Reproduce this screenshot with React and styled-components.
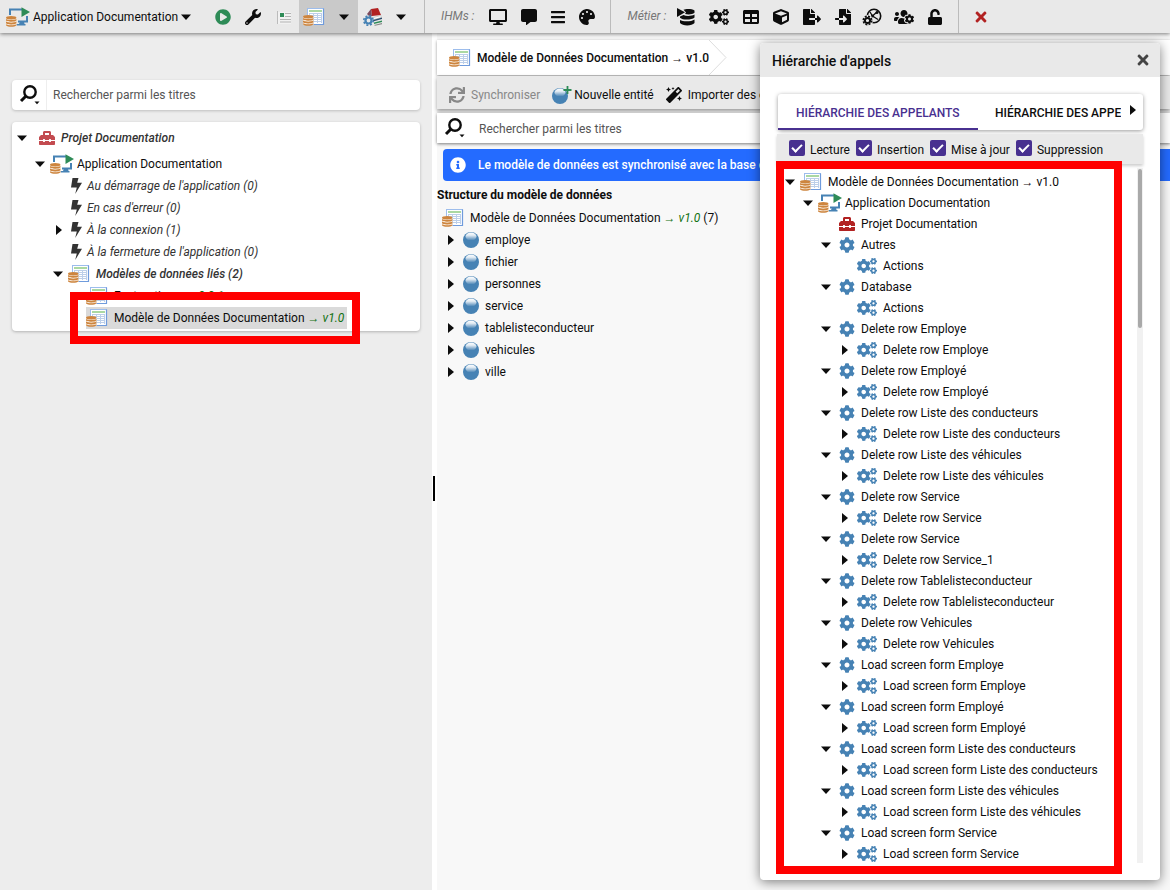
import React from 'react';
import styled, { createGlobalStyle, css } from 'styled-components';
import {
  FaBars,
  FaCog,
  FaCogs,
  FaCommentAlt,
  FaCube,
  FaDesktop,
  FaFileExport,
  FaFileImport,
  FaInfoCircle,
  FaMagic,
  FaPalette,
  FaPlayCircle,
  FaSync,
  FaTable,
  FaTimes,
  FaToolbox,
  FaUnlock,
  FaUsersCog,
  FaWrench,
} from 'react-icons/fa';

const COLOR = {
  ink: '#0d0d0d',
  grey: '#e9e9e9',
  blue: '#4682b4',
  orange: '#cd853f',
  green: '#2e8b57',
  red: '#b22222',
  violet: '#483090',
  version: '#107010',
  marker: '#ff0000',
};

const GlobalStyle = createGlobalStyle`
  *, *::before, *::after {
    box-sizing: border-box;
  }

  html, body, #root {
    height: 100%;
    margin: 0;
  }

  body, button, input {
    font-family: Roboto, 'Liberation Sans', sans-serif;
    font-size: 12px;
    color: ${COLOR.ink};
  }

  button {
    padding: 0;
    border: 0;
    background: none;
    cursor: pointer;
  }
`;

/* ---------- drawings ---------- */

const Coins = ({ y = 9 }) => (
  <g transform={`translate(0 ${y})`} fill={COLOR.orange}>
    <path d="M0 1.500h10.500v8.500h-10.500z" fill="#f6e6d4" />
    <ellipse cx="5.200" cy="1.700" rx="5.200" ry="1.700" />
    <path d="M0 2.900c1.700 1.500 8.700 1.500 10.400 0v1.600c-1.700 1.600-8.700 1.600-10.400 0z" />
    <path d="M0 5.600c1.700 1.500 8.700 1.500 10.400 0v1.600c-1.700 1.600-8.700 1.600-10.400 0z" />
    <path d="M0 8.200c1.700 1.500 8.700 1.500 10.400 0v1c-1.700 2-8.700 2-10.400 0z" />
  </g>
);

const ModelIcon = () => (
  <svg width="22" height="20" viewBox="0 0 22 20" aria-hidden="true">
    <rect x="4.500" y="1.500" width="16" height="16" fill="#fff" stroke="#9dbdec" />
    <path d="M4.500 17.500h16v-16" fill="none" stroke="#6f9bdc" strokeWidth="1.200" />
    <path d="M6 4h13" stroke="#86c77a" strokeWidth="1.400" />
    <rect x="6" y="6" width="13" height="10" fill="#bccfe9" />
    <path
      d="M7 7.500h3M11 7.500h3M15 7.500h3M7 9.500h3M11 9.500h3M15 9.500h3M7 11.500h3M11 11.500h3M15 11.500h3M11 13.500h3M15 13.500h3M11 15.500h3M15 15.500h3"
      stroke="#fff"
    />
    <Coins y={8} />
  </svg>
);

const AppIcon = () => (
  <svg width="24" height="20" viewBox="0 0 24 20" aria-hidden="true">
    <path d="M4 8V2.500h12M21 9v5.500h-9" fill="none" stroke={COLOR.blue} strokeWidth="2" />
    <path d="M14 14.500h4l.5 2.500h1v1.500h-9V17h2.500z" fill={COLOR.blue} />
    <path d="M15.500.300 24 5l-8.500 5z" fill={COLOR.green} />
    <Coins y={9} />
  </svg>
);

const DocIcon = () => (
  <svg width="16" height="16" viewBox="0 0 16 16" aria-hidden="true">
    <path d="M1 3h14v12H1z" fill="#f1f1f1" />
    <path d="M1.500 2v13" stroke="#bbb" />
    <path d="M4 4h4v4H4z" fill={COLOR.green} />
    <path d="M9 4.500h6M9 7.500h6M4 10.500h11M4 13h11" stroke="#b3b3b3" />
  </svg>
);

const BooksIcon = () => (
  <svg width="20" height="20" viewBox="0 0 20 20" aria-hidden="true">
    <path d="m8 2 7-1 3 7-9 1z" fill={COLOR.red} />
    <path d="M8 2 4 7l3 3 2-1z" fill="#7d4a5c" />
    <path d="m6 9 3 2 9-2.500v2L9 13z" fill="#fff" stroke="#aaa" strokeWidth=".5" />
    <path d="m10 13 9-2.500v1.500L10 14.500z" fill="#30506e" />
    <path d="m11 15.500 8-2v1.500l-8 2z" fill={COLOR.green} />
    <path d="m11 18 8-2v1.200l-7 1.500z" fill="#888" />
    <g transform="translate(0 8)">
      <circle cx="5.500" cy="5.500" r="3" fill={COLOR.grey} stroke={COLOR.blue} strokeWidth="2.200" />
      <circle
        cx="5.500"
        cy="5.500"
        r="4.700"
        fill="none"
        stroke={COLOR.blue}
        strokeWidth="1.600"
        strokeDasharray="2 1.690"
      />
    </g>
  </svg>
);

const DataActionIcon = () => (
  <svg width="18" height="18" viewBox="0 0 18 18" fill="currentColor" aria-hidden="true">
    <path d="M0 0 8 4.300 0 9z" />
    <path d="M9 4.600 6.500 1.800C9 .8 15 .8 17.500 2.500v2.200C15.500 6.500 11.500 6.800 8 6z" />
    <path d="M3 8.500 6.500 7c3 1.500 8 1.200 11-.5v3C15 12 6 12.500 3 9.800z" />
    <path d="M3 12c3 2 11.500 1.800 14.500-.5v3.600c-2.500 3.200-12 3.200-14.500 0z" />
  </svg>
);

const WebServiceIcon = () => (
  <svg width="20" height="18" viewBox="0 0 20 18" fill="none" stroke="currentColor" aria-hidden="true">
    <circle cx="12" cy="8" r="6.700" strokeWidth="1.600" />
    <path d="m8 4 2.500 4 5-4.500M10.500 8l5.500 3.500" strokeWidth="1.300" />
    <circle cx="10.500" cy="8" r="1.500" fill="currentColor" stroke="none" />
    <circle cx="15" cy="4.500" r="1.500" fill="currentColor" stroke="none" />
    <circle cx="5.500" cy="12.500" r="5.500" fill={COLOR.grey} stroke="none" />
    <circle cx="5.500" cy="12.500" r="2.600" strokeWidth="2" />
    <circle cx="5.500" cy="12.500" r="4.200" strokeWidth="1.600" strokeDasharray="2 1.300" />
  </svg>
);

const SphereIcon = ({ plus }) => (
  <svg width={plus ? 20 : 16} height={plus ? 18 : 16} viewBox={plus ? '0 -2 20 18' : '0 0 16 16'} aria-hidden="true">
    <defs>
      <linearGradient id="shine" x1="0" y1="0" x2="0" y2="1">
        <stop offset="0" stopColor="#fff" />
        <stop offset=".35" stopColor="#fff" stopOpacity=".85" />
        <stop offset="1" stopColor="#fff" stopOpacity="0" />
      </linearGradient>
    </defs>
    <circle cx="8" cy="8" r="8" fill={COLOR.blue} />
    <ellipse cx="8" cy="4.500" rx="5.500" ry="4" fill="url(#shine)" />
    {plus && <path d="M15.500-2V6M11.500 2H19.500" stroke={COLOR.green} strokeWidth="1.800" />}
  </svg>
);

const SearchIcon = () => (
  <svg width="22" height="22" viewBox="0 0 22 22" aria-hidden="true">
    <circle cx="12" cy="8" r="5.700" fill="none" stroke={COLOR.ink} strokeWidth="2.400" />
    <path d="m8 12-5 5" stroke={COLOR.ink} strokeWidth="3" />
    <path d="M16.500 17.500h5L19 20.200z" fill={COLOR.ink} />
  </svg>
);

const BoltIcon = () => (
  <svg width="12" height="16" viewBox="0 0 12 16" fill="#333" aria-hidden="true">
    <path d="M1.500 0h6L6.200 4.800H11L4.200 16l1.600-6.600H0z" />
  </svg>
);

const Caret = ({ open }) => (
  <svg width="10" height="10" viewBox="0 0 10 10" fill={COLOR.ink} aria-hidden="true">
    {open ? <path d="M0 2.500h10L5 8z" /> : <path d="M3 0v10L9 5z" />}
  </svg>
);

/* ---------- top bar ---------- */

const Page = styled.div`
  height: 100%;
  min-width: 1000px;
  display: flex;
  flex-direction: column;
  overflow: hidden;
  background: #ededed;
`;

const TopBar = styled.header`
  position: relative;
  z-index: 1;
  height: 33px;
  flex: none;
  display: flex;
  background: ${COLOR.grey};
  box-shadow: 0 1px 4px rgba(0, 0, 0, 0.5);
`;

const AppButton = styled.button`
  width: 208px;
  padding-left: 6px;
  display: flex;
  align-items: center;
  gap: 3px;
`;

const ToolGroup = styled.div`
  display: flex;
  border-right: 1px solid #bbb;
  padding-right: ${({ $end }) => $end || 0}px;
`;

const ToolButton = styled.button`
  width: ${({ $w }) => $w || 30}px;
  display: flex;
  align-items: center;
  justify-content: center;
  color: ${({ $color }) => $color || COLOR.ink};
  background: ${({ $active }) => ($active ? '#c9c9c9' : 'none')};
`;

const GroupLabel = styled.span`
  padding: 0 ${({ $gap }) => $gap}px 0 16px;
  line-height: 33px;
  font-style: italic;
  color: #777;
`;

/* ---------- layout ---------- */

const Body = styled.div`
  flex: 1;
  min-height: 0;
  display: flex;
`;

const SidePanel = styled.aside`
  width: 432px;
  flex: none;
  padding: 47px 12px 0;
  display: flex;
  flex-direction: column;
  gap: 12px;
`;

const Splitter = styled.div`
  width: 5px;
  display: flex;
  align-items: center;
  padding: 54px 1px 0;
  background: #fff;

  &::before {
    content: '';
    width: 2px;
    height: 25px;
    background: #000;
  }
`;

const Main = styled.main`
  flex: 1;
  min-width: 0;
  padding-top: 7px;
  display: flex;
  flex-direction: column;
  background: #f8f8f8;
`;

const Card = styled.section`
  padding: 2px 1px;
  border-radius: 4px;
  background: #fff;
  box-shadow: 0 1px 3px rgba(0, 0, 0, 0.25);
`;

const SearchBox = styled.div`
  height: 30px;
  flex: none;
  display: flex;
  border-radius: ${({ $flat }) => ($flat ? 0 : 4)}px;
  background: #fff;
  box-shadow: 0 1px 3px rgba(0, 0, 0, ${({ $flat }) => ($flat ? 0.5 : 0.2)});
  margin-top: ${({ $flat }) => ($flat ? 4 : 0)}px;
`;

const SearchButton = styled.button`
  width: 35px;
  display: grid;
  place-items: center;
  border-right: 1px solid ${({ $flat }) => ($flat ? '#fff' : '#eee')};
`;

const SearchInput = styled.input`
  flex: 1;
  min-width: 0;
  border: 0;
  padding: ${({ $flat }) => ($flat ? '2px 7px 0' : '0 6px')};
  background: none;
  outline: 0;

  &::placeholder {
    color: #555;
    opacity: 1;
  }
`;

const Search = ({ flat, id }) => (
  <SearchBox $flat={flat}>
    <SearchButton type="button" $flat={flat} aria-label="Options de recherche">
      <SearchIcon />
    </SearchButton>
    <SearchInput
      id={id}
      type="search"
      placeholder="Rechercher parmi les titres"
      aria-label="Rechercher parmi les titres"
      $flat={flat}
    />
  </SearchBox>
);

/* ---------- tree ---------- */

const Tree = styled.ul`
  margin: 0;
  padding: 0;
  list-style: none;
`;

const TreeRow = styled.li`
  height: ${({ $h }) => $h}px;
  padding-left: ${({ $level }) => $level * 18}px;
  display: flex;
  align-items: center;
`;

const Toggle = styled.button`
  width: 18px;
  height: 100%;
  display: grid;
  place-items: center;
`;

const Blank = styled.span`
  width: 18px;
`;

const ICONS = {
  model: { el: <ModelIcon />, before: 1, after: 6 },
  app: { el: <AppIcon />, before: 1, after: 3 },
  root: { el: <FaToolbox size={16} color="#c34b50" />, before: 8, after: 6 },
  project: { el: <FaToolbox size={16} color={COLOR.red} />, before: 4, after: 6 },
  event: { el: <BoltIcon />, before: 4, after: 4 },
  cog: { el: <FaCog size={16} color={COLOR.blue} />, before: 4, after: 6 },
  cogs: { el: <FaCogs size={20} color={COLOR.blue} />, before: 4, after: 6 },
  entity: { el: <SphereIcon />, before: 4, after: 6 },
};

const NodeIcon = styled.span`
  display: flex;
  padding-right: ${({ $after }) => $after}px;
`;

const NodeLabel = styled.span`
  position: relative;
  height: 22px;
  margin-left: ${({ $before }) => $before}px;
  padding-right: 3px;
  display: flex;
  align-items: center;
  white-space: pre;
  ${({ $soft }) =>
    $soft &&
    css`
      font-style: italic;
      color: #333;
    `}
  font-weight: ${({ $strong }) => ($strong ? 500 : 400)};
  background: ${({ $selected }) => ($selected ? '#dadada' : 'none')};
`;

const Version = styled.em`
  color: ${COLOR.version};
`;

const SelectedMarker = styled.span`
  position: absolute;
  inset: -15px -13px -15px -16px;
  border: 8px solid ${COLOR.marker};
  pointer-events: none;
`;

const TreeNode = ({ node, h = 22 }) => {
  const icon = ICONS[node.icon];
  return (
    <TreeRow $h={node.h || h} $level={node.level}>
      {node.open === undefined ? (
        !node.flush && <Blank />
      ) : (
        <Toggle type="button" aria-label={node.open ? 'Replier' : 'Déplier'} aria-expanded={node.open}>
          <Caret open={node.open} />
        </Toggle>
      )}
      <NodeLabel $before={icon.before} $soft={node.soft} $strong={node.strong} $selected={node.selected}>
        <NodeIcon $after={icon.after}>{icon.el}</NodeIcon>
        {node.text}
        {node.version && <Version> → {node.version}</Version>}
        {node.count && ` (${node.count})`}
        {node.selected && <SelectedMarker />}
      </NodeLabel>
    </TreeRow>
  );
};

const projectNodes = [
  { level: 0, icon: 'root', open: true, text: 'Projet Documentation', soft: true, strong: true, h: 28 },
  { level: 1, icon: 'app', open: true, text: 'Application Documentation', h: 23 },
  { level: 2, icon: 'event', text: "Au démarrage de l'application (0)", soft: true },
  { level: 2, icon: 'event', text: "En cas d'erreur (0)", soft: true },
  { level: 2, icon: 'event', open: false, text: 'À la connexion (1)', soft: true },
  { level: 2, icon: 'event', text: "À la fermeture de l'application (0)", soft: true },
  { level: 2, icon: 'model', open: true, text: 'Modèles de données liés (2)', soft: true, strong: true },
  { level: 3, icon: 'model', text: 'Facturation', version: 'v0.0.1' },
  { level: 3, icon: 'model', text: 'Modèle de Données Documentation', version: 'v1.0', selected: true },
];

const entities = ['employe', 'fichier', 'personnes', 'service', 'tablelisteconducteur', 'vehicules', 'ville'];

const callers = [
  ['Autres', 'Actions', true],
  ['Database', 'Actions', true],
  ['Delete row Employe'],
  ['Delete row Employé'],
  ['Delete row Liste des conducteurs'],
  ['Delete row Liste des véhicules'],
  ['Delete row Service'],
  ['Delete row Service', 'Delete row Service_1'],
  ['Delete row Tablelisteconducteur'],
  ['Delete row Vehicules'],
  ['Load screen form Employe'],
  ['Load screen form Employé'],
  ['Load screen form Liste des conducteurs'],
  ['Load screen form Liste des véhicules'],
  ['Load screen form Service'],
];

const callNodes = [
  { level: 0, icon: 'model', open: true, text: 'Modèle de Données Documentation → v1.0' },
  { level: 1, icon: 'app', open: true, text: 'Application Documentation' },
  { level: 2, icon: 'project', text: 'Projet Documentation' },
  ...callers.flatMap(([name, action = name, leaf]) => [
    { level: 2, icon: 'cog', open: true, text: name },
    { level: 3, icon: 'cogs', open: leaf ? undefined : false, text: action },
  ]),
];

/* ---------- main panel ---------- */

const Breadcrumb = styled.nav`
  height: 35px;
  flex: none;
  padding-left: 12px;
  display: flex;
  background: #fff;
  box-shadow: 0 1px 3px rgba(0, 0, 0, 0.4);
`;

const Crumb = styled.a`
  display: flex;
  align-items: center;
  gap: 6px;
  font-weight: 500;
  color: ${COLOR.ink};
  text-decoration: none;
`;

const Chevron = () => (
  <svg width="18" height="35" viewBox="0 0 18 35" fill="none" aria-hidden="true">
    <path d="M0 0 17 17.500 0 35" stroke="#ddd" />
  </svg>
);

const ActionBar = styled.div`
  height: 33px;
  flex: none;
  margin-top: 1px;
  padding-left: 12px;
  display: flex;
  gap: 12px;
  background: ${COLOR.grey};
  box-shadow: 0 2px 4px rgba(0, 0, 0, 0.4);
`;

const Action = styled.button`
  display: flex;
  align-items: center;
  gap: ${({ $gap }) => $gap}px;
  white-space: nowrap;
  padding-top: 4px;
  color: ${COLOR.ink};

  &:disabled {
    color: #888;
  }
`;

const Banner = styled.p`
  height: 32px;
  flex: none;
  margin: 6px 0 0 6px;
  padding-left: 7px;
  display: flex;
  align-items: center;
  gap: 12px;
  border-radius: 4px 0 0 4px;
  font-weight: 500;
  white-space: nowrap;
  color: #fff;
  background: #246bff;
`;

const Structure = styled.section`
  padding-left: 4px;
`;

const StructureTitle = styled.h2`
  margin: 0 0 0 -4px;
  padding-top: 2px;
  font-size: 12px;
  font-weight: 700;
  line-height: 24px;
`;

/* ---------- call hierarchy window ---------- */

const Dialog = styled.section`
  position: absolute;
  z-index: 2;
  top: 43px;
  right: 10px;
  bottom: 10px;
  width: 400px;
  display: flex;
  flex-direction: column;
  border-radius: 4px;
  background: #fff;
  box-shadow: 0 2px 12px rgba(0, 0, 0, 0.5);
`;

const DialogHeader = styled.header`
  height: 34px;
  flex: none;
  padding: 0 9px 0 12px;
  display: flex;
  align-items: center;
  justify-content: space-between;
  border-radius: 4px 4px 0 0;
  background: ${COLOR.grey};
`;

const DialogTitle = styled.h1`
  margin: 0;
  padding-top: 2px;
  font-size: 14px;
  font-weight: 500;
`;

const CloseButton = styled.button`
  display: flex;
  color: #444;
`;

const TabBar = styled.div`
  height: 36px;
  flex: none;
  margin: 17px 17px 0 18px;
  display: flex;
  border-radius: 3px;
  background: #fff;
  box-shadow: 0 1px 4px rgba(0, 0, 0, 0.4);
`;

const Tab = styled.button`
  width: ${({ $active }) => ($active ? 200 : 143)}px;
  flex: none;
  padding: 4px 0 0 ${({ $active }) => ($active ? 18 : 17)}px;
  overflow: hidden;
  text-align: left;
  white-space: nowrap;
  font-weight: 500;
  color: ${({ $active }) => ($active ? COLOR.violet : COLOR.ink)};
  border-bottom: 2px solid ${({ $active }) => ($active ? COLOR.violet : 'transparent')};
`;

const TabScroll = styled.button`
  flex: 1;
  display: grid;
  place-items: center;
  padding-bottom: 4px;
`;

const Filters = styled.div`
  height: 30px;
  flex: none;
  margin: 4px 17px 0;
  padding-left: 12px;
  display: flex;
  align-items: center;
  gap: 6px;
  background: ${COLOR.grey};
  box-shadow: 0 2px 3px rgba(0, 0, 0, 0.2);
`;

const FilterLabel = styled.label`
  display: flex;
  align-items: center;
  gap: 5px;
  line-height: 18px;

  span {
    padding-top: 2px;
  }
`;

const Checkbox = styled.input`
  appearance: none;
  width: 16px;
  height: 16px;
  margin: 0 0 2px;
  display: grid;
  place-items: center;
  border-radius: 2px;
  background: ${COLOR.violet};

  &:checked::before {
    content: '';
    width: 6px;
    height: 10px;
    margin-bottom: 3px;
    border: solid #fff;
    border-width: 0 2px 2px 0;
    transform: rotate(45deg);
  }
`;

const CallArea = styled.div`
  flex: 1;
  min-height: 0;
  margin: 4px 17px 17px 21px;
  display: flex;
`;

const CallTree = styled.div`
  flex: 1;
  padding-top: 3px;
  overflow: hidden;
`;

const ScrollTrack = styled.div`
  width: 6px;
  padding: 1px;
  background: #f1f1f1;
`;

const ScrollThumb = styled.div`
  height: 23%;
  border-radius: 2px;
  background: #a9a9a9;
`;

const CallMarker = styled.div`
  position: absolute;
  inset: 118px 38px 6px 16px;
  border: 8px solid ${COLOR.marker};
  pointer-events: none;
`;

const filters = ['Lecture', 'Insertion', 'Mise à jour', 'Suppression'];

const CallHierarchy = () => (
  <Dialog role="dialog" aria-labelledby="calls-title">
    <DialogHeader>
      <DialogTitle id="calls-title">Hiérarchie d'appels</DialogTitle>
      <CloseButton type="button" aria-label="Fermer">
        <FaTimes size={16} />
      </CloseButton>
    </DialogHeader>
    <TabBar role="tablist">
      <Tab type="button" role="tab" aria-selected="true" $active>
        HIÉRARCHIE DES APPELANTS
      </Tab>
      <Tab type="button" role="tab" aria-selected="false">
        HIÉRARCHIE DES APPE
      </Tab>
      <TabScroll type="button" aria-label="Onglet suivant">
        <Caret />
      </TabScroll>
    </TabBar>
    <Filters>
      {filters.map((name) => (
        <FilterLabel key={name}>
          <Checkbox type="checkbox" defaultChecked />
          <span>{name}</span>
        </FilterLabel>
      ))}
    </Filters>
    <CallArea>
      <CallTree>
        <Tree>
          {callNodes.map((node, i) => (
            <TreeNode key={i} node={node} h={21} />
          ))}
        </Tree>
      </CallTree>
      <ScrollTrack>
        <ScrollThumb />
      </ScrollTrack>
    </CallArea>
    <CallMarker />
  </Dialog>
);

const App = () => (
  <Page>
    <GlobalStyle />
    <TopBar>
      <AppButton type="button">
        <AppIcon />
        Application Documentation
        <Caret open />
      </AppButton>
      <ToolGroup $end={10}>
        <ToolButton type="button" aria-label="Exécuter" $color={COLOR.green}>
          <FaPlayCircle size={16} />
        </ToolButton>
        <ToolButton type="button" aria-label="Paramètres">
          <FaWrench size={16} />
        </ToolButton>
        <ToolButton type="button" aria-label="Documentation" $w={31}>
          <DocIcon />
        </ToolButton>
        <ToolButton type="button" aria-label="Modèles de données" $active>
          <ModelIcon />
        </ToolButton>
        <ToolButton type="button" aria-label="Choisir un modèle" $w={29} $active>
          <Caret open />
        </ToolButton>
        <ToolButton type="button" aria-label="Bibliothèques">
          <BooksIcon />
        </ToolButton>
        <ToolButton type="button" aria-label="Choisir une bibliothèque" $w={26}>
          <Caret open />
        </ToolButton>
      </ToolGroup>
      <ToolGroup $end={8}>
        <GroupLabel $gap={8}>IHMs :</GroupLabel>
        <ToolButton type="button" aria-label="Écrans" $w={32}>
          <FaDesktop size={18} />
        </ToolButton>
        <ToolButton type="button" aria-label="Messages">
          <FaCommentAlt size={16} />
        </ToolButton>
        <ToolButton type="button" aria-label="Menus" $w={28}>
          <FaBars size={16} />
        </ToolButton>
        <ToolButton type="button" aria-label="Thèmes">
          <FaPalette size={16} />
        </ToolButton>
      </ToolGroup>
      <ToolGroup $end={10}>
        <GroupLabel $gap={4}>Métier :</GroupLabel>
        <ToolButton type="button" aria-label="Actions de données" $w={32}>
          <DataActionIcon />
        </ToolButton>
        <ToolButton type="button" aria-label="Processus" $w={34}>
          <FaCogs size={20} />
        </ToolButton>
        <ToolButton type="button" aria-label="Tables">
          <FaTable size={16} />
        </ToolButton>
        <ToolButton type="button" aria-label="Objets">
          <FaCube size={16} />
        </ToolButton>
        <ToolButton type="button" aria-label="Exports" $w={32}>
          <FaFileExport size={18} />
        </ToolButton>
        <ToolButton type="button" aria-label="Imports">
          <FaFileImport size={16} />
        </ToolButton>
        <ToolButton type="button" aria-label="Services web" $w={28}>
          <WebServiceIcon />
        </ToolButton>
        <ToolButton type="button" aria-label="Rôles" $w={36}>
          <FaUsersCog size={20} />
        </ToolButton>
        <ToolButton type="button" aria-label="Droits" $w={26}>
          <FaUnlock size={16} />
        </ToolButton>
      </ToolGroup>
      <ToolButton type="button" aria-label="Fermer" $w={44} $color={COLOR.red}>
        <FaTimes size={16} />
      </ToolButton>
    </TopBar>
    <Body>
      <SidePanel>
        <Search id="project-search" />
        <Card>
          <Tree>
            {projectNodes.map((node) => (
              <TreeNode key={node.text} node={node} />
            ))}
          </Tree>
        </Card>
      </SidePanel>
      <Splitter />
      <Main>
        <Breadcrumb>
          <Crumb href="#modele">
            <ModelIcon />
            Modèle de Données Documentation → v1.0
          </Crumb>
          <Chevron />
        </Breadcrumb>
        <ActionBar>
          <Action type="button" $gap={6} disabled>
            <FaSync size={16} />
            Synchroniser
          </Action>
          <Action type="button" $gap={2}>
            <SphereIcon plus />
            Nouvelle entité
          </Action>
          <Action type="button" $gap={6}>
            <FaMagic size={16} />
            Importer des entités
          </Action>
        </ActionBar>
        <Search id="model-search" flat />
        <Banner>
          <FaInfoCircle size={16} />
          Le modèle de données est synchronisé avec la base de données
        </Banner>
        <Structure>
          <StructureTitle>Structure du modèle de données</StructureTitle>
          <Tree>
            <TreeNode
              node={{
                level: 0,
                icon: 'model',
                flush: true,
                text: 'Modèle de Données Documentation',
                version: 'v1.0',
                count: 7,
              }}
            />
            {entities.map((name) => (
              <TreeNode key={name} node={{ level: 0, icon: 'entity', open: false, text: name }} />
            ))}
          </Tree>
        </Structure>
      </Main>
    </Body>
    <CallHierarchy />
  </Page>
);

export default App;
